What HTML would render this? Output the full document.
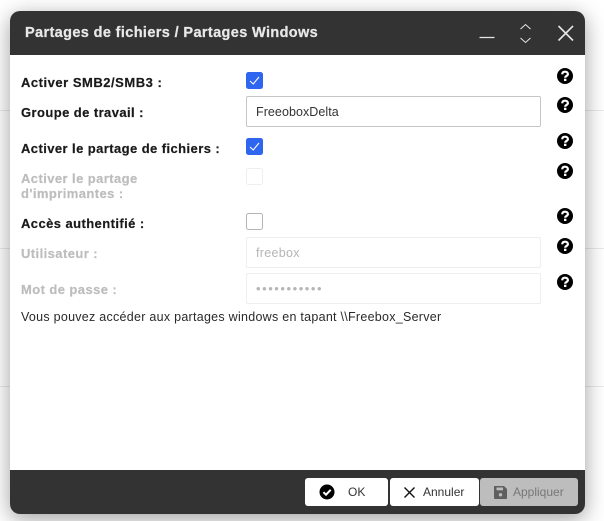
<!DOCTYPE html>
<html lang="fr">
<head>
<meta charset="utf-8">
<title>Partages Windows</title>
<style>
html,body{margin:0;padding:0;background:#fff;}
body{width:604px;height:521px;position:relative;overflow:hidden;font-family:"Liberation Sans",sans-serif;}
.line{position:absolute;left:0;width:604px;height:1px;background:#e9e9e9;}
#dlg{position:absolute;left:10px;top:11px;width:575px;height:503px;background:#fff;border-radius:10px;box-shadow:0 5px 22px rgba(0,0,0,.38);overflow:hidden;}
#hd{position:absolute;left:0;top:0;width:575px;height:44px;background:#333;}
#ft{position:absolute;left:0;top:459px;width:575px;height:44px;background:#333;}
.t{position:absolute;white-space:nowrap;}
#title{left:15px;top:14px;font-size:14.5px;line-height:17px;font-weight:bold;color:#e8e8e8;letter-spacing:.37px;-webkit-text-stroke:.25px #e8e8e8;}
.lb{font-size:13px;line-height:15px;font-weight:bold;color:#1a1a1a;left:11px;letter-spacing:.42px;-webkit-text-stroke:.2px currentColor;}
.dis{color:#bdbdbd;}
.cb{position:absolute;left:236px;width:17px;height:17px;border-radius:2.5px;box-sizing:border-box;}
.on{background:#2f66ef;}
.off{border:1.5px solid #b5b5b5;}
.offd{border:1.5px solid #eee;}
.inp{position:absolute;left:236px;width:295px;height:31px;box-sizing:border-box;border:1px solid #c6c6c6;border-radius:2px;background:#fff;font-size:12.5px;line-height:30px;padding-left:9px;color:#333;letter-spacing:.06px;}
.inpd{border-color:#eee;color:#b5b5b5;letter-spacing:.3px;}
.q{position:absolute;left:547px;width:16px;height:16px;}
.btn{position:absolute;top:467px;height:28px;border-radius:3px;background:#fff;font-size:12px;line-height:28px;color:#333;}
svg{display:block;}
</style>
</head>
<body>
<div class="line" style="top:110px"></div>
<div class="line" style="top:248px"></div>
<div class="line" style="top:386px"></div>
<div id="dlg">
  <div id="hd"></div>
  <div id="ft"></div>
  <div class="t" id="title">Partages de fichiers / Partages Windows</div>
  <svg style="position:absolute;left:460px;top:0" width="110" height="44" fill="none" stroke="#e6e6e6">
    <path d="M9.500 26.500H24.500" stroke-width="1.300"/>
    <path d="M50.500 18L55.500 13.500L60.500 18M50.500 27L55.500 31.500L60.500 27" stroke-width="1"/>
    <path d="M88.500 15L103 29.500M103 15L88.500 29.500" stroke-width="1.600"/>
  </svg>

  <div class="t lb" style="top:64px;letter-spacing:.52px">Activer SMB2/SMB3 :</div>
  <div class="cb on" style="top:61px"><svg width="17" height="17" fill="none" stroke="#fff" stroke-width="1.100"><path d="M4 9L7.200 12L13 5"/></svg></div>
  <svg class="q" style="top:57px" viewBox="0 0 16 16"><circle cx="8" cy="8" r="8" fill="#000"/><path d="M5.200 6.300C5.300 4.500 6.500 3.700 8 3.700C9.700 3.700 10.900 4.700 10.900 6.100C10.900 7.900 8.200 7.900 8.200 9.700" fill="none" stroke="#fff" stroke-width="2.200"/><rect x="7" y="10.700" width="2.400" height="2.300" fill="#fff"/></svg>

  <div class="t lb" style="top:94px">Groupe de travail :</div>
  <div class="inp" style="top:85px">FreeoboxDelta</div>
  <svg class="q" style="top:86px" viewBox="0 0 16 16"><circle cx="8" cy="8" r="8" fill="#000"/><path d="M5.200 6.300C5.300 4.500 6.500 3.700 8 3.700C9.700 3.700 10.900 4.700 10.900 6.100C10.900 7.900 8.200 7.900 8.200 9.700" fill="none" stroke="#fff" stroke-width="2.200"/><rect x="7" y="10.700" width="2.400" height="2.300" fill="#fff"/></svg>

  <div class="t lb" style="top:130px">Activer le partage de fichiers :</div>
  <div class="cb on" style="top:127px"><svg width="17" height="17" fill="none" stroke="#fff" stroke-width="1.100"><path d="M4 9L7.200 12L13 5"/></svg></div>
  <svg class="q" style="top:122px" viewBox="0 0 16 16"><circle cx="8" cy="8" r="8" fill="#000"/><path d="M5.200 6.300C5.300 4.500 6.500 3.700 8 3.700C9.700 3.700 10.900 4.700 10.900 6.100C10.900 7.900 8.200 7.900 8.200 9.700" fill="none" stroke="#fff" stroke-width="2.200"/><rect x="7" y="10.700" width="2.400" height="2.300" fill="#fff"/></svg>

  <div class="t lb dis" style="top:160px">Activer le partage</div>
  <div class="t lb dis" style="top:175px">d'imprimantes :</div>
  <div class="cb offd" style="top:157px"></div>
  <svg class="q" style="top:152px" viewBox="0 0 16 16"><circle cx="8" cy="8" r="8" fill="#000"/><path d="M5.200 6.300C5.300 4.500 6.500 3.700 8 3.700C9.700 3.700 10.900 4.700 10.900 6.100C10.900 7.900 8.200 7.900 8.200 9.700" fill="none" stroke="#fff" stroke-width="2.200"/><rect x="7" y="10.700" width="2.400" height="2.300" fill="#fff"/></svg>

  <div class="t lb" style="top:205px">Accès authentifié :</div>
  <div class="cb off" style="top:202px"></div>
  <svg class="q" style="top:197px" viewBox="0 0 16 16"><circle cx="8" cy="8" r="8" fill="#000"/><path d="M5.200 6.300C5.300 4.500 6.500 3.700 8 3.700C9.700 3.700 10.900 4.700 10.900 6.100C10.900 7.900 8.200 7.900 8.200 9.700" fill="none" stroke="#fff" stroke-width="2.200"/><rect x="7" y="10.700" width="2.400" height="2.300" fill="#fff"/></svg>

  <div class="t lb dis" style="top:235px">Utilisateur :</div>
  <div class="inp inpd" style="top:226px">freebox</div>
  <svg class="q" style="top:227px" viewBox="0 0 16 16"><circle cx="8" cy="8" r="8" fill="#000"/><path d="M5.200 6.300C5.300 4.500 6.500 3.700 8 3.700C9.700 3.700 10.900 4.700 10.900 6.100C10.900 7.900 8.200 7.900 8.200 9.700" fill="none" stroke="#fff" stroke-width="2.200"/><rect x="7" y="10.700" width="2.400" height="2.300" fill="#fff"/></svg>

  <div class="t lb dis" style="top:271px">Mot de passe :</div>
  <div class="inp inpd" style="top:262px;font-size:13px;letter-spacing:1.55px">•••••••••••</div>
  <svg class="q" style="top:263px" viewBox="0 0 16 16"><circle cx="8" cy="8" r="8" fill="#000"/><path d="M5.200 6.300C5.300 4.500 6.500 3.700 8 3.700C9.700 3.700 10.900 4.700 10.900 6.100C10.900 7.900 8.200 7.900 8.200 9.700" fill="none" stroke="#fff" stroke-width="2.200"/><rect x="7" y="10.700" width="2.400" height="2.300" fill="#fff"/></svg>

  <div class="t" style="left:11px;top:299px;font-size:12.500px;line-height:15px;color:#2a2a2a;letter-spacing:.27px">Vous pouvez accéder aux partages windows en tapant \\Freebox_Server</div>

  <div class="btn" style="left:295px;width:83px">
    <svg style="position:absolute;left:13px;top:5px" width="18" height="18" viewBox="0 0 18 18"><circle cx="9" cy="9" r="7.500" fill="#000"/><path d="M5.400 9.200L8 11.700L12.700 6.800" fill="none" stroke="#fff" stroke-width="2"/></svg>
    <span class="t" style="left:43px">OK</span>
  </div>
  <div class="btn" style="left:380px;width:89px">
    <svg style="position:absolute;left:13px;top:8px" width="13" height="13" fill="none" stroke="#111" stroke-width="1.400"><path d="M1.500 1.500L11.500 11.500M11.500 1.500L1.500 11.500"/></svg>
    <span class="t" style="left:33px">Annuler</span>
  </div>
  <div class="btn" style="left:470px;width:98px;background:#bdbdbd;color:#777">
    <svg style="position:absolute;left:13px;top:7px" width="15" height="15" viewBox="0 0 15 15"><path d="M1.500 1H11L14 4V13A1 1 0 0 1 13 14H2A1 1 0 0 1 1 13V1.500Z" fill="#5f5f5f"/><rect x="3.500" y="2.500" width="6.500" height="2.800" fill="#bdbdbd"/><circle cx="7.500" cy="9.800" r="1.700" fill="#bdbdbd"/></svg>
    <span class="t" style="left:33px">Appliquer</span>
  </div>
</div>
</body>
</html>
